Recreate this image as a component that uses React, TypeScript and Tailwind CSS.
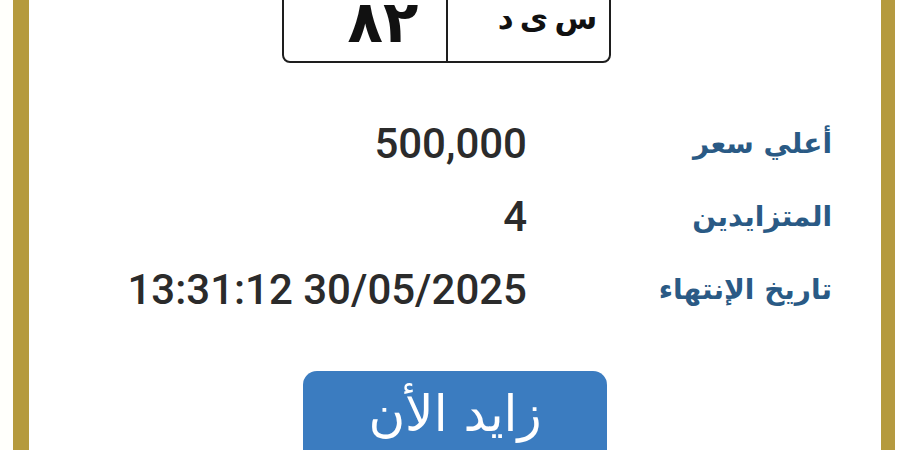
import React from "react";

const rows = [
  { label: "أعلي سعر", value: "500,000" },
  { label: "المتزايدين", value: "4" },
  { label: "تاريخ الإنتهاء", value: "13:31:12 30/05/2025" },
];

export default function App() {
  return (
    <div className="w-[900px] h-[450px] bg-[#fffffb] overflow-hidden">
      <div className="ml-[13px] w-[882px] h-[450px] border-l-[16px] border-r-[14px] border-[#b59a3d] bg-white flex flex-col">
        {/* plate */}
        <div className="shrink-0 mt-[-30px] ml-[253px] w-[329px] h-[93px] border-2 border-[#1e1e1e] rounded-[8px] flex flex-row overflow-hidden">
          <div className="w-[164px] h-full border-r-2 border-[#1e1e1e] flex items-end justify-center pl-[36px] pb-[10px]">
            <span
              className="text-[58px] leading-none font-bold text-[#111]"
              style={{ fontFamily: '"DejaVu Sans", sans-serif' }}
            >
              ٨٢
            </span>
          </div>
          <div className="flex-1 h-full flex items-end justify-center pl-[38px] pb-[27px]">
            <span
              dir="rtl"
              className="text-[31px] leading-none font-bold text-[#111]"
              style={{ fontFamily: '"DejaVu Sans", sans-serif' }}
            >
              س{"\u2009"}ى{"\u2009"}د
            </span>
          </div>
        </div>

        {/* rows */}
        <div className="shrink-0 mt-[44px] flex flex-col">
          {rows.map((r) => (
            <div key={r.label} className="shrink-0 h-[73px] flex flex-row items-center">
              <div
                className="w-[498px] text-right text-[42px] leading-none font-medium text-[#2b2b2b]"
                style={{ fontFamily: "Roboto, sans-serif" }}
              >
                {r.value}
              </div>
              <div
                dir="rtl"
                className="w-[305px] text-right text-[28px] leading-none font-bold text-[#2a5a85]"
                style={{ fontFamily: '"DejaVu Sans", sans-serif' }}
              >
                {r.label}
              </div>
            </div>
          ))}
        </div>

        {/* button */}
        <div className="shrink-0 mt-[45px] flex justify-center">
          <div className="w-[304px] h-[110px] rounded-[14px] bg-[#3b7cc0] flex justify-center pt-[18px]">
            <span
              dir="rtl"
              className="text-[50px] leading-none text-white"
              style={{ fontFamily: '"DejaVu Sans", sans-serif' }}
            >
              زايد الأن
            </span>
          </div>
        </div>
      </div>
    </div>
  );
}
